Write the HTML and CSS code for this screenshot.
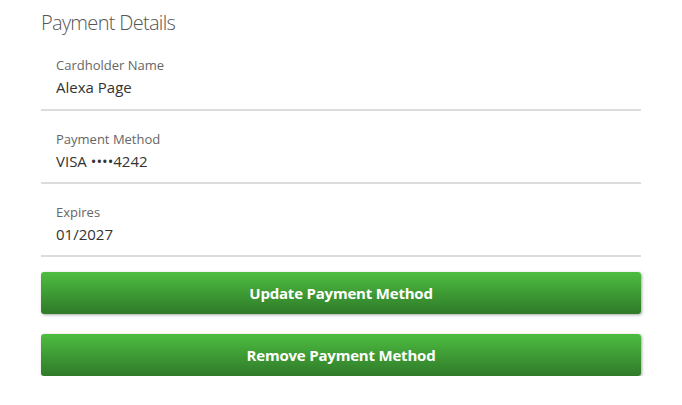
FILE: index.html
```html
<!DOCTYPE html>
<html>
<head>
<meta charset="utf-8">
<link rel="stylesheet" href="styles.css">
</head>
<body>
<div class="panel">
  <h2 class="title">Payment Details</h2>
  <div class="field">
    <div class="label">Cardholder Name</div>
    <div class="value">Alexa Page</div>
  </div>
  <div class="field">
    <div class="label">Payment Method</div>
    <div class="value">VISA ••••4242</div>
  </div>
  <div class="field">
    <div class="label">Expires</div>
    <div class="value">01/2027</div>
  </div>
  <div class="actions">
    <button class="btn">Update Payment Method</button>
    <button class="btn">Remove Payment Method</button>
  </div>
</div>
</body>
</html>
```
FILE: styles.css
```css
html, body {
  margin: 0;
  padding: 0;
  background: #fff;
}
body {
  font-family: "Open Sans", "Noto Sans", sans-serif;
}
.panel {
  width: 600px;
  margin-left: 41px;
  padding-top: 9px;
}
.title {
  margin: 0;
  font-size: 20px;
  line-height: 28px;
  font-weight: 300;
  letter-spacing: -0.7px;
  color: #555;
}
.field {
  padding: 19px 15px 11px 15px;
  border-bottom: 2px solid #dcdcdc;
}
.field + .field {
  padding-bottom: 10px;
}
.label {
  font-size: 13px;
  line-height: 18px;
  color: #666;
  margin-bottom: 2px;
}
.value {
  font-size: 15px;
  line-height: 22px;
  color: #333;
}
.actions {
  display: flex;
  flex-direction: column;
  gap: 20px;
  margin-top: 15px;
}
.btn {
  display: block;
  width: 600px;
  height: 42px;
  border: none;
  border-radius: 3px;
  background: linear-gradient(to bottom, #4dbd40 0%, #2f7a29 100%);
  box-shadow: 1px 1px 3px rgba(0,0,0,0.35);
  color: #fff;
  font-family: "Open Sans", "Noto Sans", sans-serif;
  font-size: 15px;
  font-weight: 700;
  letter-spacing: -0.2px;
  cursor: pointer;
}
```
